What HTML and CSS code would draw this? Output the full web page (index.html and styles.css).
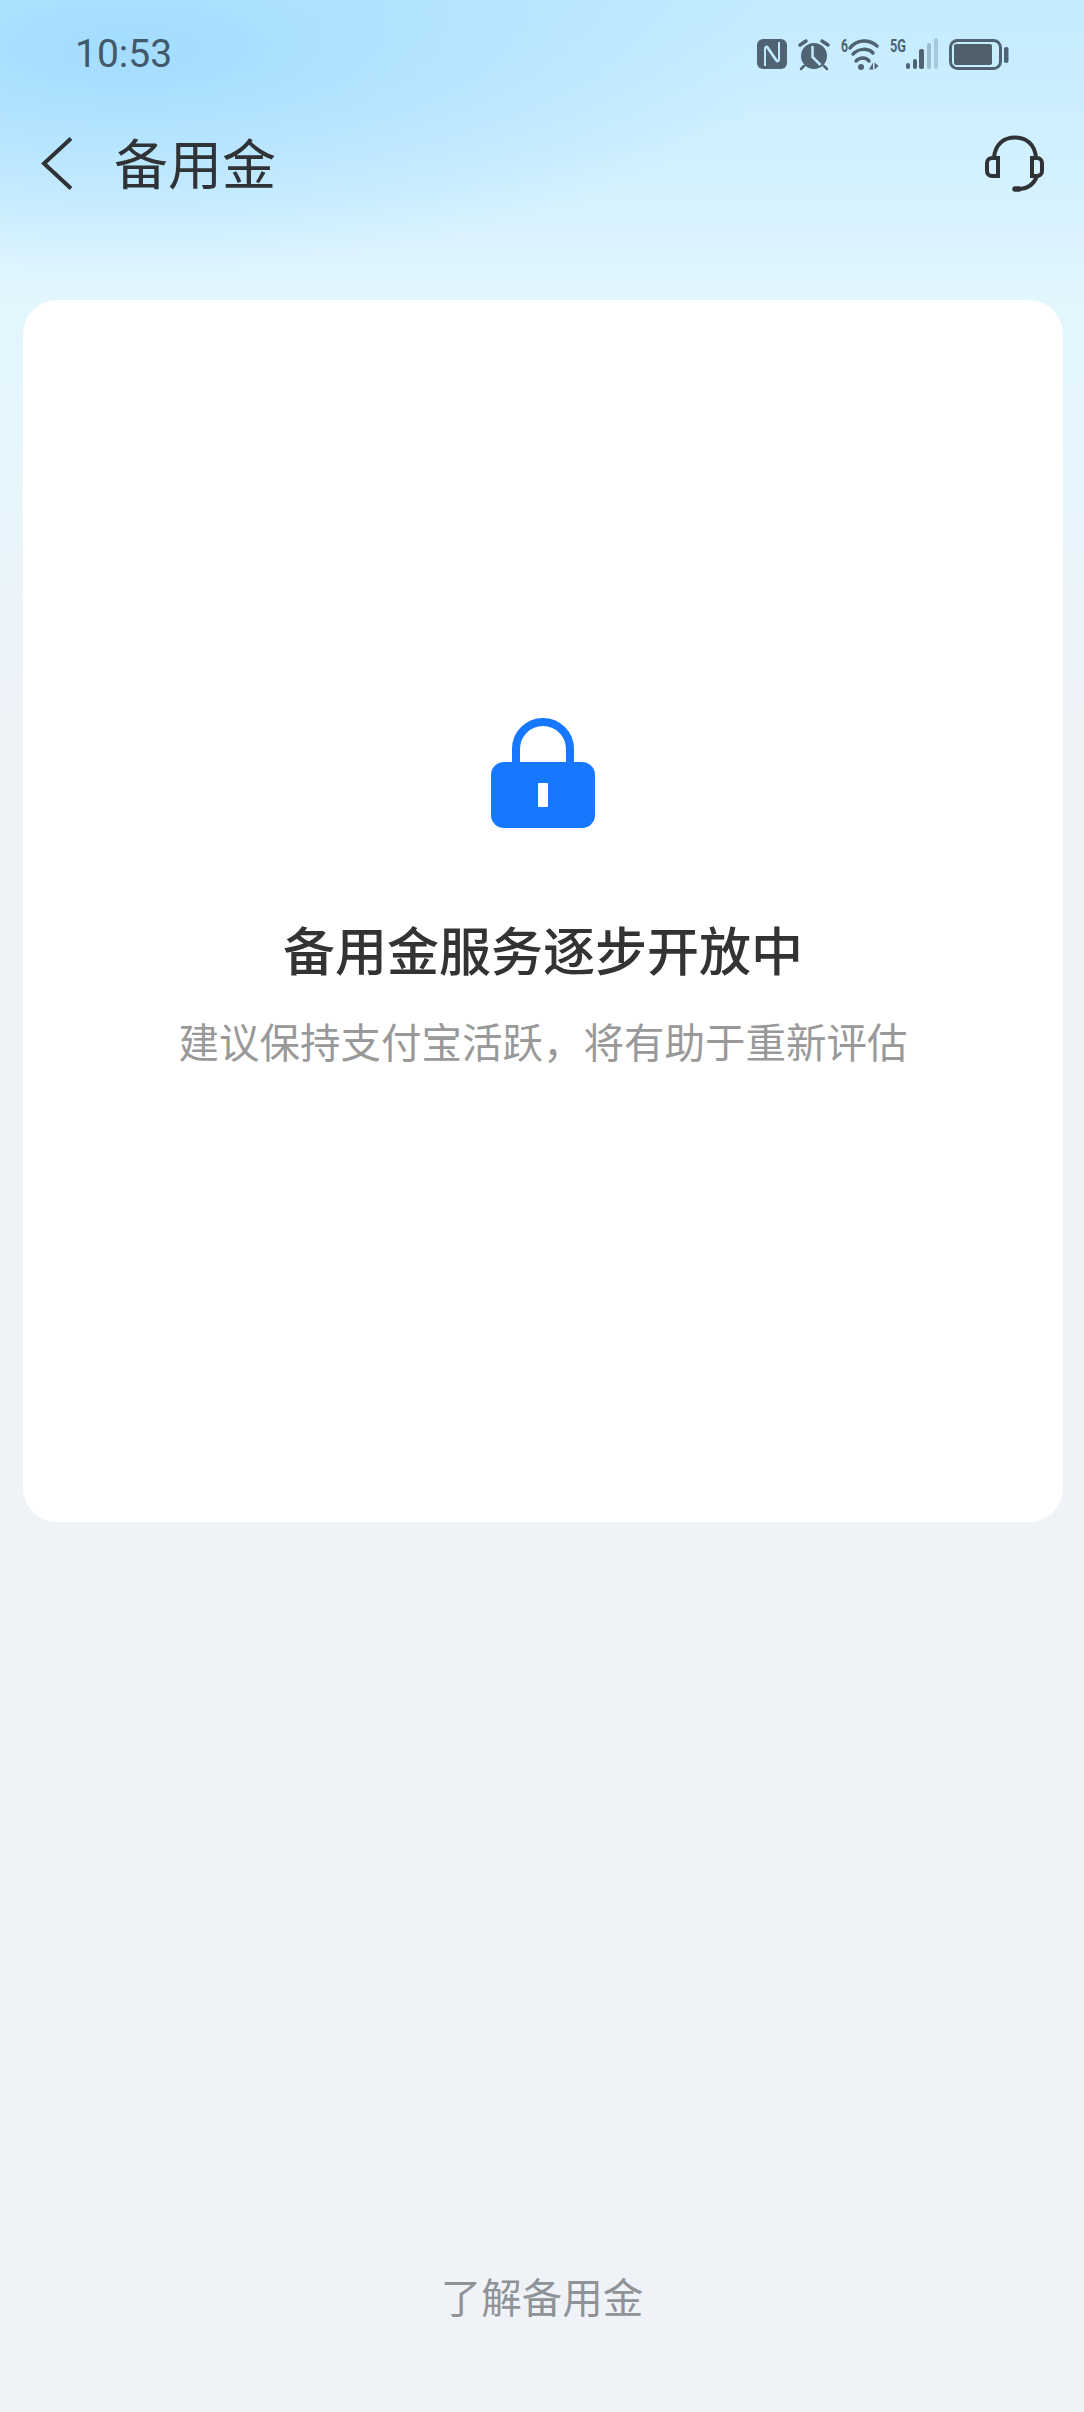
FILE: index.html
```html
<!DOCTYPE html>
<html lang="zh-CN">
<head>
    <meta charset="UTF-8">
    <meta name="viewport" content="width=device-width, initial-scale=1.0">
    <title>备用金</title>
    <link rel="stylesheet" href="styles.css">
</head>
<body>
    <div class="page">
        <!-- Status bar -->
        <div class="status-bar">
            <span class="status-time">10:53</span>
            <div class="status-icons">
                <svg width="30" height="30" viewBox="0 0 30 30">
                    <rect width="30" height="30" rx="6" fill="#4f6373"/>
                    <path d="M8 27V9.500c0-2 2-2.500 3-1L21 23M22 3v17.500c0 2-2 2.500-3 1L9 7" fill="none" stroke="#c0e9fe" stroke-width="2"/>
                </svg>
                <svg width="34" height="32" viewBox="0 0 34 32">
                    <circle cx="17" cy="18" r="13" fill="#4f6373"/>
                    <path d="M3 7l6-4M31 7l-6-4" stroke="#4f6373" stroke-width="3.500" stroke-linecap="round"/>
                    <path d="M7 28l-3 3M27 28l3 3" stroke="#4f6373" stroke-width="2.500" stroke-linecap="round"/>
                    <path d="M15.500 8v11l8 8" fill="none" stroke="#c0e9fe" stroke-width="2.500"/>
                </svg>
                <svg width="38" height="32" viewBox="0 0 38 32">
                    <text class="status-mini" x="0" y="14" textLength="7" lengthAdjust="spacingAndGlyphs">6</text>
                    <path d="M9 10C16 1 28 1 36 8M12 16c6-6 15-6 20-1M15 23c4-4 10-4 13 0" fill="none" stroke="#4f6373" stroke-width="3.500" stroke-linecap="round"/>
                    <circle cx="20" cy="29" r="3" fill="#4f6373"/>
                    <path d="M28 31.500l4-7v7zM33.500 24.500l4 3.500-4 3.500z" fill="#4f6373"/>
                </svg>
                <svg width="50" height="32" viewBox="0 0 50 32">
                    <text class="status-mini" x="1" y="14" textLength="16" lengthAdjust="spacingAndGlyphs">5G</text>
                    <rect x="17" y="25" width="4" height="6" rx="2" fill="#4f6373"/>
                    <rect x="24" y="21" width="4" height="10" rx="2" fill="#4f6373"/>
                    <rect x="30" y="11" width="5" height="20" rx="2" fill="#4f6373"/>
                    <rect x="38" y="5" width="4" height="26" rx="2" fill="#9dbccd"/>
                    <rect x="45" y="0" width="4" height="31" rx="2" fill="#a9c8d8"/>
                </svg>
                <svg width="60" height="32" viewBox="0 0 60 32">
                    <rect x="1.500" y="2.500" width="50" height="28" rx="7" fill="none" stroke="#4f6373" stroke-width="3"/>
                    <rect x="5" y="6" width="38" height="21" rx="2" fill="#4f5f6b"/>
                    <rect x="55" y="9" width="4.500" height="16" rx="2" fill="#4f6373"/>
                </svg>
            </div>
        </div>

        <!-- Nav bar -->
        <div class="nav-bar">
            <svg class="nav-icon" width="32" height="54" viewBox="0 0 32 54">
                <path d="M30 1.500L3 26.500l27 25" fill="none" stroke="#2f3336" stroke-width="4"/>
            </svg>
            <h1 class="nav-title">备用金</h1>
            <svg class="nav-icon" width="62" height="60" viewBox="0 0 62 60">
                <path d="M10 24C11 10 20 3.500 31 3.500S51 10 52 24" fill="none" stroke="#2f3336" stroke-width="4"/>
                <path d="M14 24H8a5 5 0 0 0-5 5v8a5 5 0 0 0 5 5h6z" fill="none" stroke="#2f3336" stroke-width="4"/>
                <path d="M48 24h5a5 5 0 0 1 5 5v8a5 5 0 0 1-5 5h-5z" fill="none" stroke="#2f3336" stroke-width="4"/>
                <path d="M53 42c-3 8-9 13-19 13" fill="none" stroke="#2f3336" stroke-width="4"/>
                <path d="M31 55h4" stroke="#2f3336" stroke-width="5.500" stroke-linecap="round"/>
            </svg>
        </div>

        <!-- Card -->
        <div class="card">
            <svg class="lock-icon" width="104" height="110" viewBox="0 0 104 110">
                <path d="M25 46V31a27 27 0 0 1 54 0v15" fill="none" stroke="#1677ff" stroke-width="8"/>
                <rect y="44" width="104" height="66" rx="13" fill="#1677ff"/>
                <rect x="47" y="65" width="10" height="24" rx="1" fill="#fff"/>
            </svg>
            <h2 class="card-title">备用金服务逐步开放中</h2>
            <p class="card-text">建议保持支付宝活跃，将有助于重新评估</p>
        </div>

        <a href="#" class="learn-link">了解备用金</a>
    </div>
</body>
</html>
```

FILE: styles.css
```css
* {
    margin: 0;
    padding: 0;
    box-sizing: border-box;
}

body {
    font-family: "Roboto", "Noto Sans CJK SC", sans-serif;
    background: #eff3f8;
}

.page {
    width: 1084px;
    height: 2412px;
    display: flex;
    flex-direction: column;
    background:
        radial-gradient(ellipse 640px 220px at 130px 50px, #a3dcff, rgba(163, 220, 255, 0)),
        linear-gradient(180deg, #c2ebff 0, #d6f2ff 200px, #e2f6fe 300px, #e8f6fd 500px, #edf4f9 660px, #eff3f8 740px);
}

.status-bar {
    height: 108px;
    padding: 0 75px;
    display: flex;
    align-items: center;
    justify-content: space-between;
}

.status-time {
    font-size: 39px;
    color: #42596b;
}

.status-icons {
    display: flex;
    align-items: center;
    gap: 10px;
}

.status-icons svg {
    overflow: visible;
}

.status-mini {
    font-family: "Roboto", sans-serif;
    font-size: 19px;
    font-weight: 700;
    fill: #4f6373;
}

.nav-bar {
    height: 106px;
    padding: 0 38px 0 41px;
    display: flex;
    align-items: center;
}

.nav-icon {
    flex-shrink: 0;
    margin-top: 6px;
}

.nav-title {
    flex: 1;
    margin-left: 41px;
    font-size: 54px;
    font-weight: 400;
    color: #2f3336;
}

.card {
    width: 1040px;
    height: 1222px;
    margin: 86px 0 0 23px;
    padding-top: 418px;
    background: #fff;
    border-radius: 34px;
    display: flex;
    flex-direction: column;
    align-items: center;
}

.card-title {
    margin-top: 90px;
    font-size: 52px;
    line-height: 72px;
    font-weight: 500;
    color: #333;
}

.card-text {
    margin-top: 26px;
    font-size: 40.500px;
    line-height: 56px;
    color: #999;
}

.learn-link {
    margin-top: auto;
    margin-bottom: 85px;
    text-align: center;
    font-size: 40.500px;
    line-height: 56px;
    color: #8f9398;
    text-decoration: none;
}
```
